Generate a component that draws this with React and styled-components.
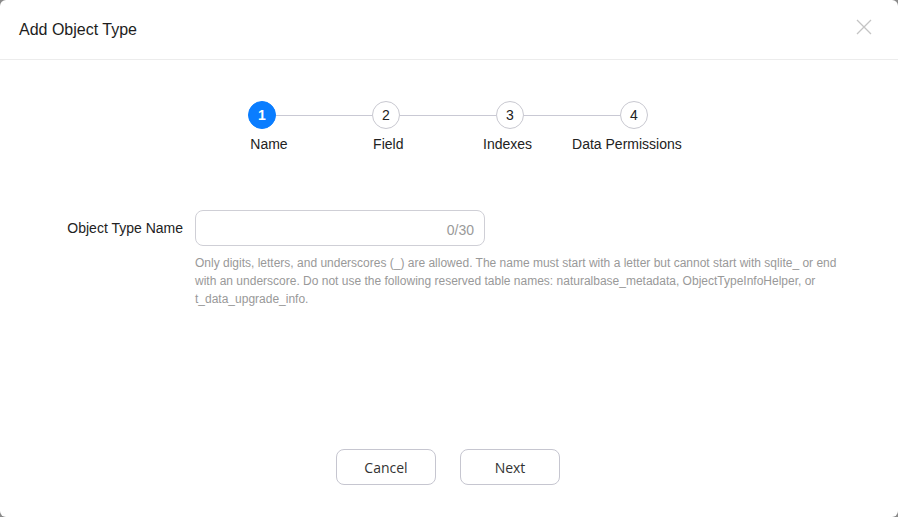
import React from 'react';
import styled, { createGlobalStyle } from 'styled-components';

const GlobalStyle = createGlobalStyle`
  html, body {
    margin: 0;
    padding: 0;
    background: #8a8a8a;
  }
  body {
    font-family: "Liberation Sans", Arial, sans-serif;
  }
`;

const Dialog = styled.div`
  width: 898px;
  height: 517px;
  background: #fff;
  border-radius: 6px;
  box-sizing: border-box;
  display: flex;
  flex-direction: column;
  overflow: hidden;
`;

const Header = styled.div`
  height: 59px;
  flex: 0 0 auto;
  display: flex;
  align-items: center;
  justify-content: space-between;
  padding: 0 24px 0 19px;
  border-bottom: 1px solid #ececec;
  .title {
    font-size: 16px;
    color: #1d1d1d;
  }
`;

const CloseButton = styled.button`
  border: none;
  background: none;
  padding: 0;
  margin-top: -6px;
  width: 20px;
  height: 20px;
  display: flex;
  align-items: center;
  justify-content: center;
  cursor: pointer;
`;

const Body = styled.div`
  flex: 1;
  display: flex;
  flex-direction: column;
  align-items: center;
  padding-top: 41px;
`;

const Steps = styled.div`
  display: flex;
  align-items: flex-start;
  margin-left: -2px;
`;

const Step = styled.div`
  position: relative;
  width: 124px;
  display: flex;
  flex-direction: column;
  align-items: center;
  &:not(:last-child)::after {
    content: '';
    position: absolute;
    top: 14px;
    left: calc(50% + 14px);
    width: calc(100% - 28px);
    height: 1px;
    background: #c9c9d4;
  }
`;

const Circle = styled.div`
  width: 28px;
  height: 28px;
  box-sizing: border-box;
  border-radius: 50%;
  display: flex;
  align-items: center;
  justify-content: center;
  font-size: 14px;
  background: ${(p) => (p.$active ? '#0a7dff' : '#fff')};
  color: ${(p) => (p.$active ? '#fff' : '#222')};
  border: 1px solid ${(p) => (p.$active ? '#0a7dff' : '#c8c8d0')};
  font-weight: ${(p) => (p.$active ? 'bold' : 'normal')};
`;

const StepLabel = styled.div`
  margin-top: 7px;
  font-size: 14px;
  color: #222;
  white-space: nowrap;
  transform: translateX(${(p) => p.$shift}px);
`;

const Form = styled.div`
  align-self: stretch;
  display: grid;
  grid-template-columns: 183px 645px;
  column-gap: 12px;
  margin-top: 58px;
`;

const Label = styled.label`
  text-align: right;
  font-size: 14px;
  color: #222;
  line-height: 36px;
`;

const InputBox = styled.div`
  width: 290px;
  height: 36px;
  box-sizing: border-box;
  border: 1px solid #cfcfd6;
  border-radius: 8px;
  display: flex;
  align-items: center;
  padding: 0 10px 0 12px;
  input {
    flex: 1;
    border: none;
    outline: none;
    font-size: 14px;
    background: transparent;
    min-width: 0;
  }
  .count {
    font-size: 14px;
    color: #9a9a9a;
    margin-top: 4px;
  }
`;

const Hint = styled.div`
  grid-column: 2;
  margin-top: 8px;
  font-size: 12px;
  line-height: 18px;
  color: #999;
`;

const Footer = styled.div`
  display: flex;
  justify-content: center;
  gap: 24px;
  padding-bottom: 32px;
  padding-right: 2px;
`;

const Button = styled.button`
  width: 100px;
  height: 36px;
  box-sizing: border-box;
  border: 1px solid #c6c6d0;
  border-radius: 8px;
  background: #fff;
  font-family: "Open Sans", "Liberation Sans", sans-serif;
  font-size: 14px;
  color: #333;
  cursor: pointer;
`;

const steps = ['Name', 'Field', 'Indexes', 'Data Permissions'];

export default function App() {
  return (
    <>
      <GlobalStyle />
      <Dialog>
        <Header>
          <span className="title">Add Object Type</span>
          <CloseButton aria-label="close">
            <svg width="16" height="16" viewBox="0 0 16 16">
              <path d="M1 1 L15 15 M15 1 L1 15" stroke="#c4c4c4" strokeWidth="1.3" />
            </svg>
          </CloseButton>
        </Header>
        <Body>
          <Steps>
            {steps.map((s, i) => (
              <Step key={s}>
                <Circle $active={i === 0}>{i + 1}</Circle>
                <StepLabel $shift={7 - 4.7 * i}>{s}</StepLabel>
              </Step>
            ))}
          </Steps>
          <Form>
            <Label>Object Type Name</Label>
            <InputBox>
              <input type="text" />
              <span className="count">0/30</span>
            </InputBox>
            <Hint>
              Only digits, letters, and underscores (_) are allowed. The name must start with a letter but cannot start with sqlite_ or end
              with an underscore. Do not use the following reserved table names: naturalbase_metadata, ObjectTypeInfoHelper, or
              t_data_upgrade_info.
            </Hint>
          </Form>
        </Body>
        <Footer>
          <Button>Cancel</Button>
          <Button>Next</Button>
        </Footer>
      </Dialog>
    </>
  );
}
